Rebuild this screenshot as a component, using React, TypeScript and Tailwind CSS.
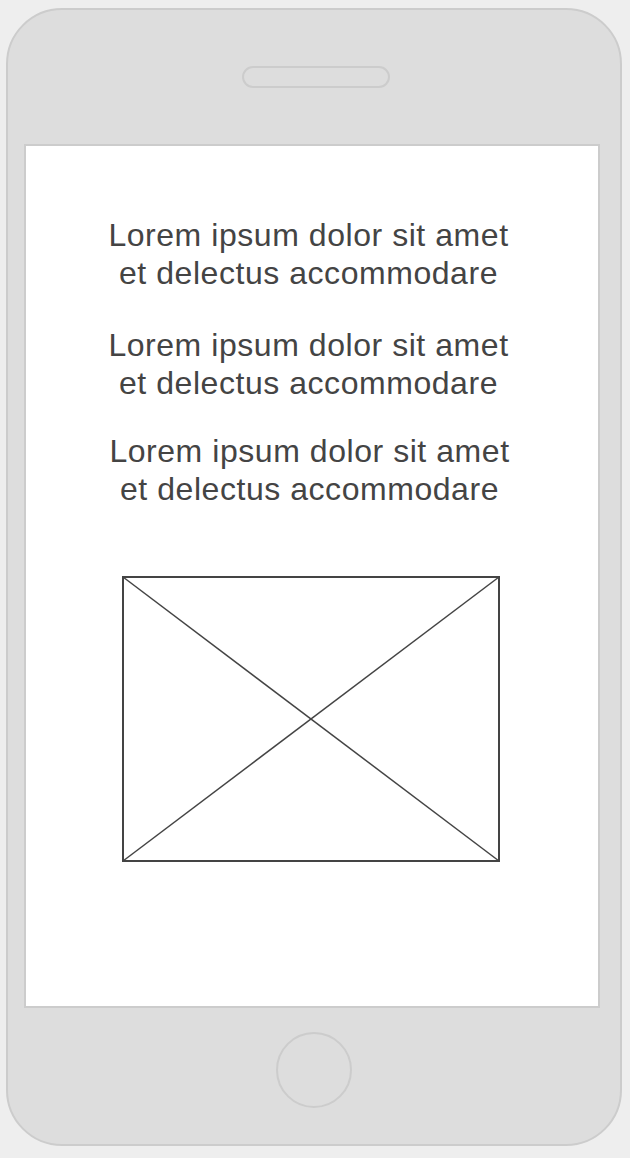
export default function App() {
  const blocks = [
    { pad: "pr-[7px]", gap: "mt-0" },
    { pad: "pr-[7px]", gap: "mt-[34px]" },
    { pad: "pr-[5px]", gap: "mt-[30px]" },
  ];

  return (
    <div className="min-h-[1158px] w-[630px] bg-[#eeeeee] pl-[6px] pt-[8px] font-['Liberation_Sans',Arial,sans-serif]">
      {/* phone body */}
      <div className="h-[1138px] w-[616px] rounded-[56px] border-2 border-[#cccccc] bg-[#dddddd] pt-[56px]">
        {/* speaker */}
        <div className="ml-[234px] h-[22px] w-[148px] rounded-full border-2 border-[#cccccc]" />

        {/* screen */}
        <div className="ml-[16px] mt-[56px] h-[864px] w-[576px] border-2 border-[#cccccc] bg-white pt-[70px]">
          {blocks.map((b, i) => (
            <p
              key={i}
              className={`${b.gap} ${b.pad} text-center text-[32px] leading-[38px] tracking-[0.55px] text-[#444444]`}
            >
              Lorem ipsum dolor sit amet
              <br />
              et delectus accommodare
            </p>
          ))}

          <div className="ml-[96px] mt-[68px] h-[286px] w-[378px]">
            <svg width="378" height="286" viewBox="0 0 378 286">
              <rect x="1" y="1" width="376" height="284" fill="none" stroke="#444444" strokeWidth="2" />
              <line x1="1" y1="1" x2="377" y2="285" stroke="#444444" strokeWidth="1.5" />
              <line x1="377" y1="1" x2="1" y2="285" stroke="#444444" strokeWidth="1.5" />
            </svg>
          </div>
        </div>

        {/* home button */}
        <div className="ml-[268px] mt-[24px] h-[76px] w-[76px] rounded-full border-2 border-[#cccccc]" />
      </div>
    </div>
  );
}
